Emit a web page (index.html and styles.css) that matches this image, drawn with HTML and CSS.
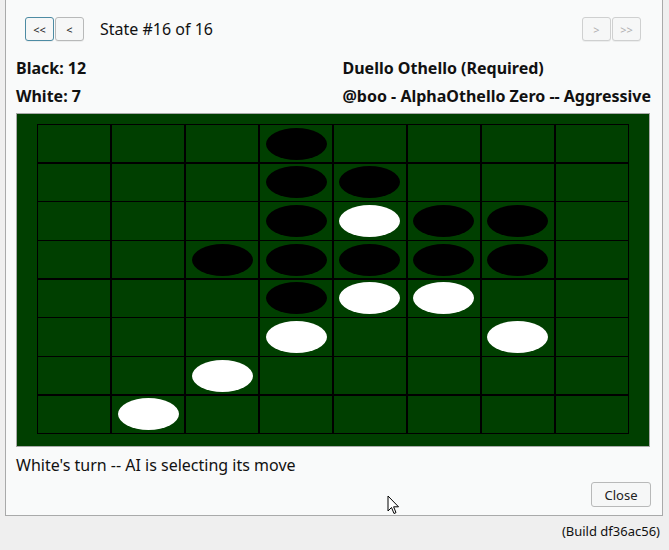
FILE: index.html
```html
<!DOCTYPE html>
<html>
<head>
<meta charset="utf-8">
<link rel="stylesheet" href="styles.css">
</head>
<body>
<div class="panel">
  <div class="nav">
    <div class="btns">
      <button class="nb focus">&lt;&lt;</button><button class="nb">&lt;</button>
    </div>
    <span class="state">State #16 of 16</span>
    <div class="spacer"></div>
    <div class="btns">
      <button class="nb dis">&gt;</button><button class="nb dis">&gt;&gt;</button>
    </div>
  </div>
  <div class="info">
    <span>Black: 12</span><span>Duello Othello (Required)</span>
    <span>White: 7</span><span>@boo - AlphaOthello Zero -- Aggressive</span>
  </div>
  <div class="board">
    <div class="grid" id="grid">
      <div class="c"></div><div class="c"></div><div class="c"></div><div class="c"><i class="b"></i></div><div class="c"></div><div class="c"></div><div class="c"></div><div class="c"></div>
      <div class="c"></div><div class="c"></div><div class="c"></div><div class="c"><i class="b"></i></div><div class="c"><i class="b"></i></div><div class="c"></div><div class="c"></div><div class="c"></div>
      <div class="c"></div><div class="c"></div><div class="c"></div><div class="c"><i class="b"></i></div><div class="c"><i class="w"></i></div><div class="c"><i class="b"></i></div><div class="c"><i class="b"></i></div><div class="c"></div>
      <div class="c"></div><div class="c"></div><div class="c"><i class="b"></i></div><div class="c"><i class="b"></i></div><div class="c"><i class="b"></i></div><div class="c"><i class="b"></i></div><div class="c"><i class="b"></i></div><div class="c"></div>
      <div class="c"></div><div class="c"></div><div class="c"></div><div class="c"><i class="b"></i></div><div class="c"><i class="w"></i></div><div class="c"><i class="w"></i></div><div class="c"></div><div class="c"></div>
      <div class="c"></div><div class="c"></div><div class="c"></div><div class="c"><i class="w"></i></div><div class="c"></div><div class="c"></div><div class="c"><i class="w"></i></div><div class="c"></div>
      <div class="c"></div><div class="c"></div><div class="c"><i class="w"></i></div><div class="c"></div><div class="c"></div><div class="c"></div><div class="c"></div><div class="c"></div>
      <div class="c"></div><div class="c"><i class="w"></i></div><div class="c"></div><div class="c"></div><div class="c"></div><div class="c"></div><div class="c"></div><div class="c"></div>
    </div>
  </div>
  <div class="status">White's turn -- AI is selecting its move</div>
  <div class="foot"><button class="close">Close</button></div>
</div>
<div class="build">(Build df36ac56)</div>
<svg class="cursor" width="13" height="21" viewBox="0 0 13 21"><path d="M1 1 L1 16 L4.5 12.5 L7 18.5 L9 17.6 L6.6 11.8 L11.5 11.8 Z" fill="#fff" stroke="#000" stroke-width="1" stroke-linejoin="round"/></svg>
</body>
</html>
```
FILE: styles.css
```css
html, body {
  margin: 0;
  padding: 0;
  background: #efefef;
  font-family: "Noto Sans", "Open Sans", sans-serif;
  color: #111;
}
body {
  width: 669px;
  height: 550px;
  position: relative;
  overflow: hidden;
}
.panel {
  margin-left: 5px;
  margin-top: -2px;
  width: 635px;
  padding: 13px 11px 8px 10px;
  background: #f9fafa;
  border: 1px solid #a9aaaa;
  border-top: none;
  display: flex;
  flex-direction: column;
}
.nav {
  display: flex;
  align-items: center;
  height: 28px;
  padding: 4px 10px 0 9px;
}
.btns {
  display: flex;
  gap: 1px;
}
.nb {
  width: 29px;
  height: 24px;
  border: 1px solid #b8b9b9;
  border-radius: 3px;
  background: #f6f7f7;
  font-family: "Noto Sans", sans-serif;
  font-size: 11px;
  color: #222;
  padding: 0;
  box-shadow: 0 1px 0 rgba(0,0,0,0.05);
}
.nb.focus {
  border-color: #4d8ba3;
}
.nb.dis {
  color: #b0b0b0;
  border-color: #cfd0d0;
}
.state {
  margin-left: 16px;
  font-size: 16px;
}
.spacer { flex: 1; }
.info {
  margin-top: 11px;
  display: grid;
  grid-template-columns: 1fr auto;
  grid-auto-rows: 28px;
  align-items: center;
  font-weight: bold;
  font-size: 16px;
}
.board {
  margin-top: 3px;
  width: 612px;
  height: 320px;
  padding: 10px 0 2px 20px;
  background: #003f00;
  border: 1px solid #a8aaa8;
}
.grid {
  width: 590px;
  height: 308px;
  display: grid;
  grid-template-columns: repeat(8, 1fr);
  grid-template-rows: repeat(8, 1fr);
  gap: 1.5px;
  background: #000;
  border: 1px solid #000;
}
.c {
  background: #003f00;
  display: flex;
  align-items: center;
  justify-content: center;
}
.c i {
  display: block;
  width: 61px;
  height: 32px;
  border-radius: 50%;
}
.c i.b { background: #000; }
.c i.w { background: #fff; }
.status {
  margin-top: 6px;
  font-size: 16px;
  height: 24px;
  line-height: 24px;
}
.foot {
  margin-top: 5px;
  display: flex;
  justify-content: flex-end;
}
.close {
  width: 60px;
  height: 25px;
  border: 1px solid #b8b9b9;
  border-radius: 3px;
  background: #f6f7f7;
  font-family: "Noto Sans", sans-serif;
  font-size: 13px;
  color: #222;
  padding: 0;
}
.build {
  text-align: right;
  padding-right: 9px;
  margin-top: 6px;
  font-size: 13px;
  line-height: 18px;
  color: #111;
}
.cursor {
  position: absolute;
  left: 387px;
  top: 495px;
}
```
